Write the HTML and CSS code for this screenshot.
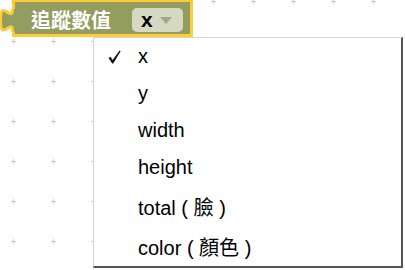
FILE: index.html
```html
<!DOCTYPE html>
<html lang="zh-Hant">
<head>
    <meta charset="UTF-8">
    <title>追蹤數值</title>
    <link rel="stylesheet" href="styles.css">
</head>
<body>
    <div class="workspace">
        <svg class="grid" width="405" height="270">
            <defs>
                <pattern id="dots" patternUnits="userSpaceOnUse" width="40" height="40" x="-7" y="-19">
                    <rect x="18" y="20" width="5" height="1" fill="#ccc"/>
                    <rect x="20" y="18" width="1" height="5" fill="#ccc"/>
                </pattern>
            </defs>
            <rect width="405" height="270" fill="url(#dots)"/>
        </svg>

        <div class="block">
            <svg class="tab" width="16" height="30" viewBox="0 0 16 30">
                <path d="M16 2 H13.5 c0 15 -12 -12 -12 11.25 s12 -3.75 12 11.25 H16 Z" fill="#929d5f"/>
                <path d="M13.5 2 c0 15 -12 -12 -12 11.25 s12 -3.75 12 11.25" fill="none" stroke="#fc3" stroke-width="3"/>
            </svg>
            <span class="block-label">追蹤數值</span>
            <span class="field">
                <span class="field-text">x</span>
                <svg class="arrow" width="12" height="7" viewBox="0 0 12 7">
                    <polygon points="0,0 12,0 6,7" fill="#a1a883"/>
                </svg>
            </span>
        </div>

        <ul class="menu">
            <li class="menu-item">
                <svg class="check" width="13" height="14" viewBox="0 0 13 14">
                    <path d="M0.5 8 L2.6 6.8 L4.6 10 L11.6 0.5 L12.6 1.2 L5.2 13.4 L4.2 13.4 Z" fill="#111"/>
                </svg>
                x
            </li>
            <li class="menu-item">y</li>
            <li class="menu-item">width</li>
            <li class="menu-item">height</li>
            <li class="menu-item tall">total ( 臉 )</li>
            <li class="menu-item last">color ( 顏色 )</li>
        </ul>
    </div>
</body>
</html>
```

FILE: styles.css
```css
html, body {
    margin: 0;
    padding: 0;
}
body {
    background-color: #fff;
    font-family: "Liberation Sans", Arial, "Noto Sans CJK TC", sans-serif;
    overflow: hidden;
}
.workspace {
    position: relative;
    width: 405px;
    height: 270px;
    overflow: hidden;
}
.grid {
    position: absolute;
    left: 0;
    top: 0;
}

/* block on the canvas */
.block {
    position: absolute;
    left: 12px;
    top: -1px;
    height: 28px;
    display: flex;
    align-items: center;
    gap: 21px;
    padding: 4px 7px 0 16px;
    background-color: #929d5f;
    border: 3px solid #fc3;
}
.tab {
    position: absolute;
    left: -16px;
    top: 5px;
}
.block-label {
    font-family: "Noto Sans CJK TC", sans-serif;
    font-size: 20px;
    font-weight: 700;
    line-height: 24px;
    color: #fff;
}
.field {
    display: flex;
    align-items: center;
    width: 51px;
    height: 24px;
    box-sizing: border-box;
    padding-left: 9px;
    background-color: #d6d9c1;
    border-radius: 5px;
}
.field-text {
    font-size: 21px;
    font-weight: 700;
    line-height: 24px;
    color: #000;
}
.arrow {
    margin-left: 7px;
    margin-top: 1px;
}

/* dropdown */
.menu {
    position: absolute;
    left: 93px;
    top: 37px;
    width: 307px;
    margin: 0;
    padding: 0;
    list-style: none;
    background-color: #fff;
    border-style: solid;
    border-width: 1px 2px 2px 1px;
    border-color: #d4d4d4 #555 #555 #d4d4d4;
}
.menu-item {
    position: relative;
    display: flex;
    align-items: center;
    height: 37px;
    padding-left: 44px;
    font-size: 20px;
    color: #000;
}
.menu-item.tall {
    height: 41px;
}
.menu-item.last {
    height: 39px;
}
.check {
    position: absolute;
    left: 14px;
    top: 12px;
}
```
